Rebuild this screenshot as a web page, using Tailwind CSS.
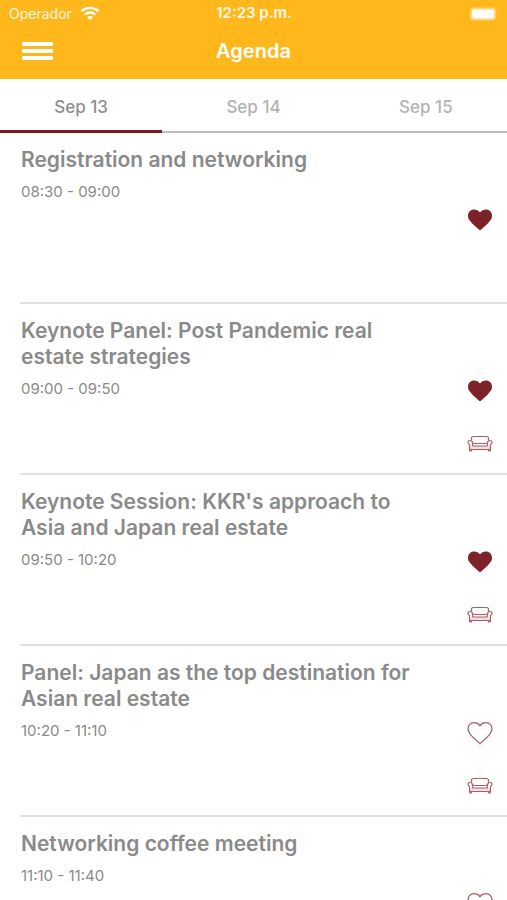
<!DOCTYPE html>
<html lang="en">
<head>
<meta charset="utf-8">
<meta name="viewport" content="width=device-width, initial-scale=1">
<title>Agenda</title>
<script src="https://cdn.jsdelivr.net/npm/@tailwindcss/browser@4"></script>
</head>
<body class="flex h-screen flex-col overflow-hidden bg-white font-['Inter','Liberation_Sans',sans-serif] text-[#8a8a8a]">
<svg class="hidden" aria-hidden="true">
  <symbol id="heart" viewBox="0 0 26 24">
    <path d="M13 22.500C10.500 20.200 5.500 16.200 3 12.800C1.400 10.700 1 9.400 1 7.700C1 4.200 3.600 1.600 7 1.600C9.600 1.600 11.800 2.900 13 4.600C14.200 2.900 16.400 1.600 19 1.600C22.400 1.600 25 4.200 25 7.700C25 9.400 24.600 10.700 23 12.800C20.500 16.200 15.500 20.200 13 22.500Z"/>
  </symbol>
  <symbol id="sofa" viewBox="0 0 26 18">
    <path d="M4.500 5.500V3.500Q4.500 1.500 6.500 1.500H19.500Q21.500 1.500 21.500 3.500V5.500M6.500 8.500H19.500M5.500 11H20.500M2.500 14.500H23.500"/>
    <path d="M2.500 16V9.500Q1 8.500 1 7.500Q1 5.500 3.200 5.500Q5 5.500 5.500 7.500V11M5.500 7.500L6.500 8.500M23.500 16V9.500Q25 8.500 25 7.500Q25 5.500 22.800 5.500Q21 5.500 20.500 7.500V11M20.500 7.500L19.500 8.500M2.500 16H4.500V14.500M23.500 16H21.500V14.500"/>
    <path d="M2.500 11H23.500V14.500H2.500Z" fill="#a9606a" fill-opacity=".2" stroke="none"/>
  </symbol>
</svg>

<header class="shrink-0 bg-[#feb81c] text-white">
  <div class="grid h-[27px] grid-cols-3 items-center pr-2 pl-[9px]">
    <div class="flex items-center gap-2 text-[14px] text-white/85">
      <span>Operador</span>
      <svg class="h-[15px] w-[20px]" viewBox="0 0 20 15" fill="none" stroke="white" stroke-width="2.400" role="img" aria-label="Wi-Fi">
        <path d="M1.500 5.200C6.200 .8 13.800 .8 18.500 5.200M4.800 8.600C7.800 5.800 12.200 5.800 15.200 8.600"/>
        <path d="M10 14L7 11Q10 8.800 13 11Z" fill="white" stroke="none"/>
      </svg>
    </div>
    <div class="text-center text-[15px] font-semibold text-white/90">12:23 p.m.</div>
    <svg class="h-[14px] w-[30px] justify-self-end" viewBox="0 0 30 14" role="img" aria-label="Battery full">
      <rect x="1" y=".5" width="26" height="13" rx="4" fill="white" fill-opacity=".4"/>
      <rect x="3" y="2.500" width="22" height="9" rx="2" fill="white"/>
      <path d="M28 5Q30 7 28 9Z" fill="white" fill-opacity=".5"/>
    </svg>
  </div>
  <div class="grid h-[52px] grid-cols-[1fr_auto_1fr] items-center px-[22px] pb-1">
    <button type="button" aria-label="Menu" class="flex w-[31px] flex-col gap-[3px]">
      <span class="h-1 rounded-[1px] bg-white"></span>
      <span class="h-1 rounded-[1px] bg-white"></span>
      <span class="h-1 rounded-[1px] bg-white"></span>
    </button>
    <h1 class="text-[20px] font-semibold">Agenda</h1>
  </div>
</header>

<nav class="grid h-[54px] shrink-0 grid-cols-[32fr_36fr_32fr] border-b-2 border-[#bdbdbd] text-[17px] font-medium text-[#b3b3b3]">
  <button type="button" class="-mb-0.5 border-b-3 border-[#7a1c22] pt-1.5 text-[#8f8f8f]">Sep 13</button>
  <button type="button" class="pt-1.5">Sep 14</button>
  <button type="button" class="pt-1.5">Sep 15</button>
</nav>

<main class="min-h-0 flex-1 overflow-y-auto [scrollbar-width:none]">
  <ul class="pl-5">
    <li class="flex min-h-[171px] border-b-2 border-[#e1e1e1]">
      <div class="flex-1 pt-[14px] pl-px">
        <h2 class="text-[21px] leading-[26px] font-semibold">Registration and networking</h2>
        <p class="mt-[9px] text-[15px] leading-5">08:30 - 09:00</p>
      </div>
      <div class="flex w-20 flex-col items-end gap-[32px] pt-[75px] pr-[14px]">
        <button type="button" aria-label="Remove favorite"><svg class="block h-6 w-[26px] fill-[#7e2229]"><use href="#heart"/></svg></button>
      </div>
    </li>
    <li class="flex min-h-[171px] border-b-2 border-[#e1e1e1]">
      <div class="flex-1 pt-[14px] pl-px">
        <h2 class="text-[21px] leading-[26px] font-semibold">Keynote Panel: Post Pandemic real estate strategies</h2>
        <p class="mt-[9px] text-[15px] leading-5">09:00 - 09:50</p>
      </div>
      <div class="flex w-20 flex-col items-end gap-[32px] pt-[75px] pr-[14px]">
        <button type="button" aria-label="Remove favorite"><svg class="block h-6 w-[26px] fill-[#7e2229]"><use href="#heart"/></svg></button>
        <button type="button" aria-label="Lounge"><svg class="block h-[18px] w-[26px] fill-none stroke-[#a9606a] stroke-[1.2]"><use href="#sofa"/></svg></button>
      </div>
    </li>
    <li class="flex min-h-[171px] border-b-2 border-[#e1e1e1]">
      <div class="flex-1 pt-[14px] pl-px">
        <h2 class="text-[21px] leading-[26px] font-semibold">Keynote Session: KKR's approach to Asia and Japan real estate</h2>
        <p class="mt-[9px] text-[15px] leading-5">09:50 - 10:20</p>
      </div>
      <div class="flex w-20 flex-col items-end gap-[32px] pt-[75px] pr-[14px]">
        <button type="button" aria-label="Remove favorite"><svg class="block h-6 w-[26px] fill-[#7e2229]"><use href="#heart"/></svg></button>
        <button type="button" aria-label="Lounge"><svg class="block h-[18px] w-[26px] fill-none stroke-[#a9606a] stroke-[1.2]"><use href="#sofa"/></svg></button>
      </div>
    </li>
    <li class="flex min-h-[171px] border-b-2 border-[#e1e1e1]">
      <div class="flex-1 pt-[14px] pl-px">
        <h2 class="text-[21px] leading-[26px] font-semibold">Panel: Japan as the top destination for Asian real estate</h2>
        <p class="mt-[9px] text-[15px] leading-5">10:20 - 11:10</p>
      </div>
      <div class="flex w-20 flex-col items-end gap-[32px] pt-[75px] pr-[14px]">
        <button type="button" aria-label="Add favorite"><svg class="block h-6 w-[26px] fill-none stroke-[#a9606a] stroke-[1.3]"><use href="#heart"/></svg></button>
        <button type="button" aria-label="Lounge"><svg class="block h-[18px] w-[26px] fill-none stroke-[#a9606a] stroke-[1.2]"><use href="#sofa"/></svg></button>
      </div>
    </li>
    <li class="flex min-h-[171px] border-b-2 border-[#e1e1e1]">
      <div class="flex-1 pt-[14px] pl-px">
        <h2 class="text-[21px] leading-[26px] font-semibold">Networking coffee meeting</h2>
        <p class="mt-[9px] text-[15px] leading-5">11:10 - 11:40</p>
      </div>
      <div class="flex w-20 flex-col items-end gap-[32px] pt-[75px] pr-[14px]">
        <button type="button" aria-label="Add favorite"><svg class="block h-6 w-[26px] fill-none stroke-[#a9606a] stroke-[1.3]"><use href="#heart"/></svg></button>
      </div>
    </li>
  </ul>
</main>
</body>
</html>
